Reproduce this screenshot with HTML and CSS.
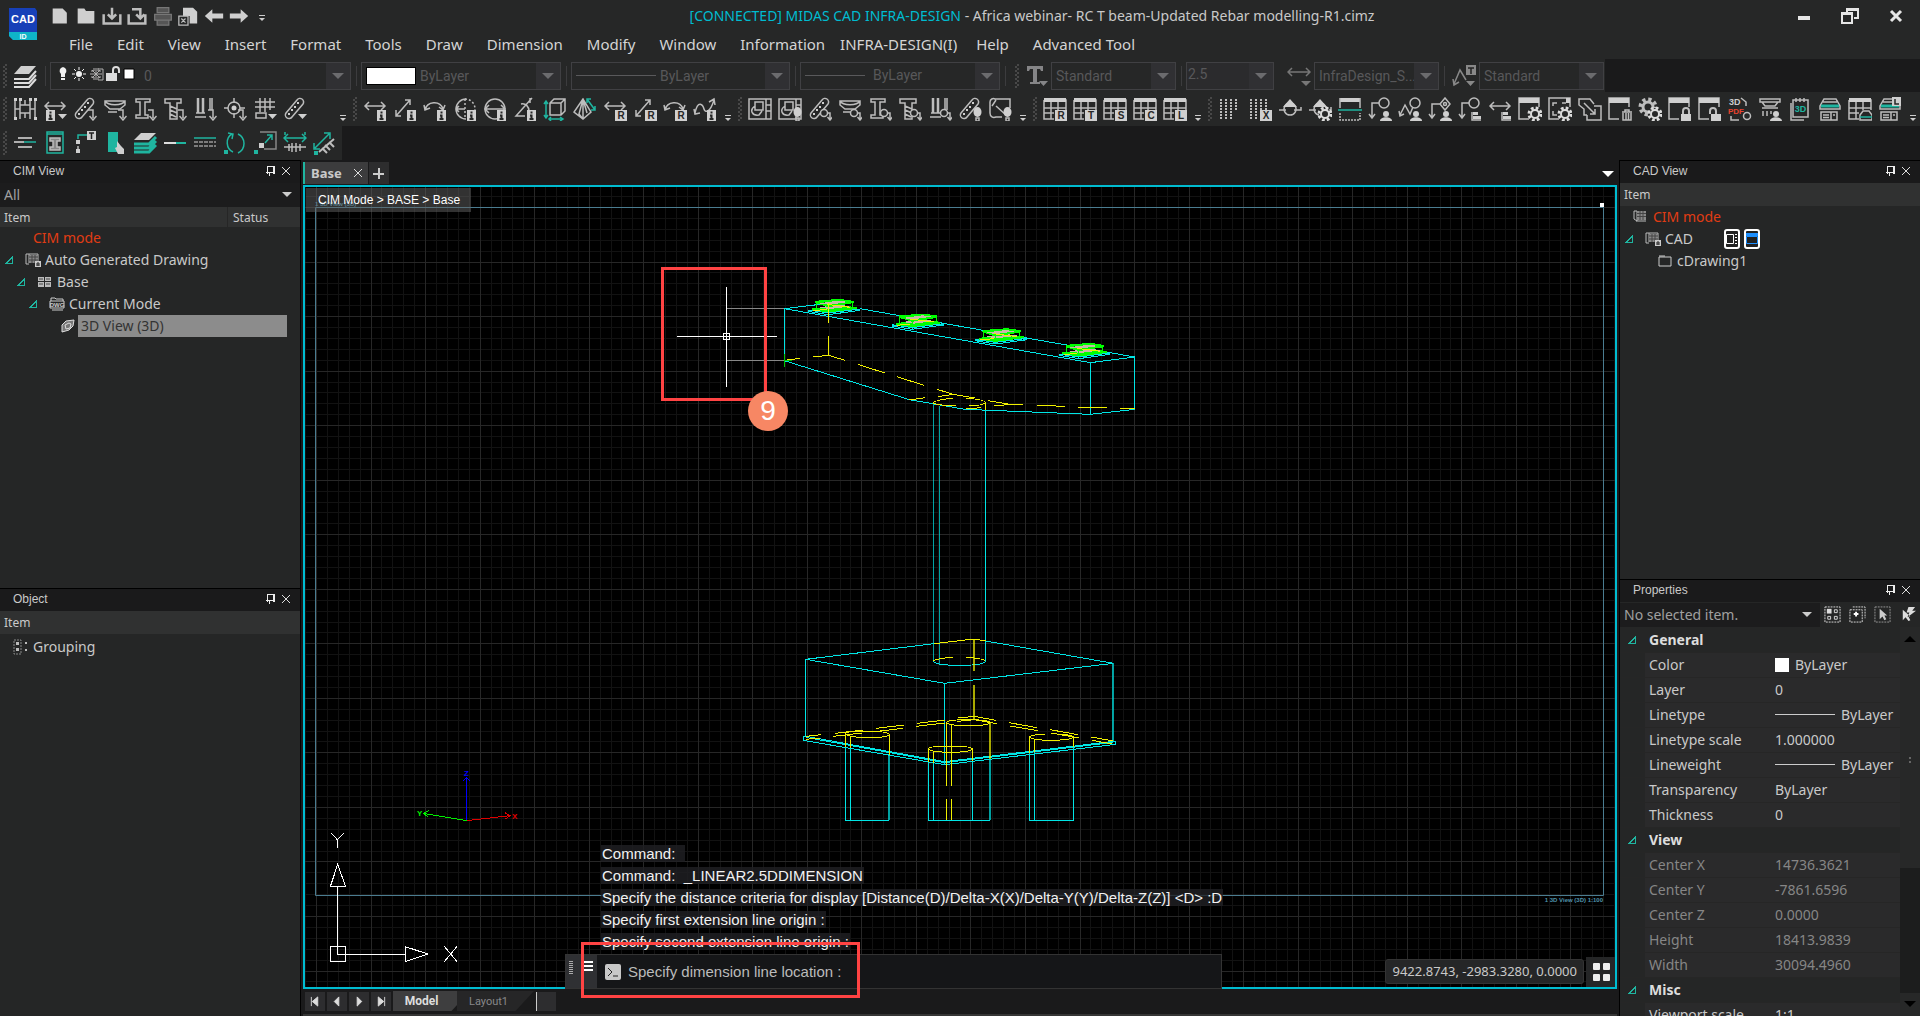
FILE: index.html
```html
<!DOCTYPE html>
<html lang="en">
<head>
    <meta charset="utf-8">
    <title>MIDAS CAD INFRA-DESIGN</title>
    <link rel="stylesheet" href="styles.css">
</head>
<body>
    <!-- Header: logo, quick access, title and menu -->
    <header class="app-header">
        <svg class="app-logo" viewBox="0 0 28 32">
            <path d="M0 0h26l2 3v29H4l-4-4z" fill="#1740b8"/>
            <path d="M0 24h28v8H4l-4-4z" fill="#0fb4c8"/>
            <text x="14" y="15" class="logo-cad">CAD</text>
            <text x="14" y="31" class="logo-id">ID</text>
        </svg>
        <div class="header-rows">
            <div class="title-row">
                <div class="quick-access" data-icons="new open save saveas print export back forward"></div>
                <h1 class="app-title"><span class="connected">[CONNECTED] MIDAS CAD INFRA-DESIGN</span> - Africa webinar- RC T beam-Updated Rebar modelling-R1.cimz</h1>
                <div class="window-buttons">
                    <button aria-label="Minimize"><svg viewBox="0 0 18 18"><path d="M3 9h12v4H3z" fill="#e6e6e6"/></svg></button>
                    <button aria-label="Restore"><svg viewBox="0 0 18 18"><path d="M6 5V2h11v9h-4M1 6h10v10H1zM1 7h10M6 3h11" fill="none" stroke="#e6e6e6" stroke-width="2"/></svg></button>
                    <button aria-label="Close"><svg viewBox="0 0 18 18"><path d="M4 4l10 10M14 4L4 14" stroke="#e6e6e6" stroke-width="3"/></svg></button>
                </div>
            </div>
            <nav class="menu">
                <button>File</button><button>Edit</button><button>View</button><button>Insert</button><button>Format</button><button>Tools</button><button>Draw</button><button>Dimension</button><button>Modify</button><button>Window</button><button>Information</button><button class="menu-infra">INFRA-DESIGN(I)</button><button>Help</button><button>Advanced Tool</button>
            </nav>
        </div>
    </header>

    <!-- Layer and style combos -->
    <div class="format-bar">
        <div class="format-inner">
            <span class="grip"></span>
            <div class="icon-run" data-icons="layers"></div>
            <span class="sep"></span>
            <div class="combo combo-layer">
                <svg class="layer-state" viewBox="0 0 78 16">
                    <path d="M5 1a4 4 0 0 1 2 7v3H3V8a4 4 0 0 1 2-7zM3 12h4v2H3z" fill="#f0f0f0"/>
                    <circle cx="21" cy="8" r="3" fill="#f0f0f0"/>
                    <path d="M21 1v3M21 12v3M14 8h3M25 8h3M16 3l2 2M24 11l2 2M26 3l-2 2M18 11l-2 2" stroke="#f0f0f0"/>
                    <path d="M38 2v12M32 8h12M34 4l8 8M42 4l-8 8M33 5h3V2M43 5h-3V2M33 11h3v3M43 11h-3v3M40 3h5v11h-5" stroke="#b0b0b0" fill="none"/>
                    <path d="M48 7h11v8H48z" fill="#ddd"/>
                    <path d="M55 7V4a3 3 0 0 1 6 0v3" stroke="#ddd" stroke-width="2" fill="none"/>
                    <path d="M66 3h10v10H66z" fill="#fff" stroke="#000"/>
                </svg>
                <select aria-label="Layer"><option>0</option></select>
            </div>
            <span class="sep"></span>
            <div class="combo combo-color"><span class="swatch"></span><select aria-label="Color"><option>ByLayer</option></select></div>
            <span class="sep"></span>
            <div class="combo combo-ltype"><span class="stroke-sample"></span><select aria-label="Linetype"><option>ByLayer</option></select></div>
            <span class="sep"></span>
            <div class="combo combo-weight"><span class="stroke-sample"></span><select aria-label="Lineweight"><option>ByLayer</option></select></div>
            <span class="sep"></span>
            <span class="grip grip-dim"></span>
            <div class="icon-run style-icon" data-icons="textstyle"></div>
            <div class="combo combo-style"><select aria-label="Text style"><option>Standard</option></select></div>
            <span class="sep"></span>
            <div class="combo combo-size"><select aria-label="Text height"><option>2.5</option></select></div>
            <div class="icon-run dim-icon" data-icons="dimstyle"></div>
            <div class="combo combo-style"><select aria-label="Dimension style"><option>InfraDesign_S...</option></select></div>
            <span class="sep"></span>
            <div class="icon-run style-icon" data-icons="leaderstyle"></div>
            <div class="combo combo-style"><select aria-label="Leader style"><option>Standard</option></select></div>
        </div>
    </div>

    <!-- Icon toolbars, filled from script.js -->
    <div class="toolbar">
        <div class="tool-group tool-group-first"><span class="grip"></span><div class="icon-run" data-icons="frame lin+il+tri rebar+down ring+down ibeam+down tbolt+down piles+down target+down mesh+tri rebar+tri"></div><span class="more"></span></div>
        <div class="tool-group"><span class="grip"></span><div class="icon-run" data-icons="lin+i diag+i arc+i circ+i diam+i angle+i box3d pyramid lin+R diag+R arc+R spline+i"></div><span class="more"></span></div>
        <div class="tool-group"><span class="grip"></span><div class="icon-run" data-icons="sheet sheet+pin rebar+node ring+node ibeam+node tbolt+node piles+node rebar+pin plate+pin"></div><span class="more"></span></div>
        <div class="tool-group"><span class="grip"></span><div class="icon-run" data-icons="table+R table+T table+S table+C table+L"></div><span class="more"></span></div>
        <div class="tool-group"><span class="grip"></span><div class="icon-run" data-icons="dots dots+X weld weld+gear section leader+man zigzag+man diamond+man leader+flag lin+flag win+gear marks+gear copywin win+trash cog+gear win+lock win+unlock pdf roller+man cal roof+doc table+minroof roof+doc+Lt"></div><span class="more"></span></div>
    </div>
    <div class="toolbar toolbar-short">
        <div class="tool-group"><span class="grip"></span><div class="icon-run" data-icons="twolines tealbeam noteT hand layersteal halfline fourlines rotate scale spacing diagdims"></div></div>
    </div>

    <main class="workspace">
        <!-- Left docks -->
        <aside class="dock dock-left">
            <section class="panel cim-panel">
                <h2 class="panel-title">CIM View <span class="panel-tools"><button class="pin" aria-label="Pin"></button><button class="close" aria-label="Close"><svg viewBox="0 0 10 10"><path d="M1 1l8 8M9 1L1 9"/></svg></button></span></h2>
                <div class="filter"><select aria-label="Filter"><option>All</option></select></div>
                <div class="columns"><span class="col-item">Item</span><span class="col-status">Status</span></div>
                <ul class="tree">
                    <li class="level-1 alert">CIM mode</li>
                    <li class="level-0"><i class="twist"></i><svg class="tree-icon" viewBox="0 0 16 16"><use href="#t-drawing"/></svg>Auto Generated Drawing</li>
                    <li class="level-2"><i class="twist"></i><svg class="tree-icon" viewBox="0 0 16 16"><path d="M1 3h6v4H1zM8 3h6v4H8zM1 8h6v5H1zM8 8h6v5H8z" fill="#bbb"/><path d="M2 5h4M9 5h4M2 10h4M9 10h4" stroke="#444"/></svg>Base</li>
                    <li class="level-3"><i class="twist"></i><svg class="tree-icon" viewBox="0 0 16 16"><path d="M2 5V2h4l1 1h7v2M1 5h14v7H1zM3 14h11" fill="none" stroke="#ccc"/><text x="8" y="11" class="dwg">DWG</text></svg>Current Mode</li>
                    <li class="level-4"><svg class="tree-icon" viewBox="0 0 16 16"><path d="M2 7l4-4 8-1-1 6-4 4-7 2zM5 7l4-2 2 1-1 4-4 1z" fill="#777" stroke="#ddd"/></svg><span class="selected">3D View (3D)</span></li>
                </ul>
            </section>
            <section class="panel">
                <h2 class="panel-title">Object <span class="panel-tools"><button class="pin" aria-label="Pin"></button><button class="close" aria-label="Close"><svg viewBox="0 0 10 10"><path d="M1 1l8 8M9 1L1 9"/></svg></button></span></h2>
                <div class="columns"><span class="col-item">Item</span></div>
                <ul class="tree tree-object">
                    <li class="level-obj"><svg class="tree-icon" viewBox="0 0 16 16"><path d="M1 1h7v14H1z" fill="none" stroke="#888" stroke-dasharray="2 1"/><path d="M3 3h3v3H3zM3 9h3v3H3zM12 3h2v2h-2zM12 10h2v2h-2z" fill="#bbb"/></svg>Grouping</li>
                </ul>
            </section>
        </aside>

        <!-- Drawing area -->
        <section class="center">
            <div class="doc-tabs">
                <div class="doc-tab"><span>Base</span><button class="tab-close" aria-label="Close tab"><svg viewBox="0 0 10 10"><path d="M1 1l8 8M9 1L1 9"/></svg></button></div>
                <button class="tab-add" aria-label="New tab"></button>
                <span class="tab-list"></span>
            </div>
            <div class="viewport">
                <svg class="drawing" viewBox="305 187 1310 800" preserveAspectRatio="xMinYMin slice">
                    <g id="grid"></g>
                    <path d="M315.500 207.500H1603.500V895.500H315.500z" class="paper"/>
                    <text x="315" y="206" class="paper-text">1 3D View (3D)</text>
                    <text x="1603" y="902" class="paper-text paper-text-end">1 3D View (3D) 1:100</text>
                    <path d="M1600 203h4v4h-4z" fill="#fff"/>
                    <defs>
                        <g id="bearing">
                            <path d="M505 184l60 10 95-13-60-10zM505 180l60 9 95-12M565 185v9" class="cyan"/>
                            <path d="M516 178l50 7 84-11-48-6z" fill="#00ff00" stroke="#00ff00" stroke-width="5"/>
                            <path d="M535 172l35 5 62-8-32-5z" fill="#c9b8a8"/>
                            <path d="M527 156l72-6 41 6-74 12z" fill="#333" stroke="#00ff00" stroke-width="7"/>
                            <path d="M536 160l60-8 30 4-58 8z" fill="#c9b8a8"/>
                            <path d="M528 160v16M638 160v14M566 168v12" stroke="#00ff00" stroke-width="3"/>
                            <path d="M560 163l70 9M520 182l40-4" class="yellow"/>
                        </g>
                        <g id="t-drawing">
                            <path d="M1 2v10h3M1 2h3v9M4 2h9v7" fill="none" stroke="#bbb"/>
                            <path d="M4 3h9v8H4z" fill="#888"/><path d="M4 5h9M4 8h9M7 3v8M10 3v8" stroke="#444"/>
                            <path d="M10 9h6v6h-6z" fill="#ccc"/><path d="M12 14v-3h2v3M12 13h2" fill="none" stroke="#222"/>
                        </g>
                    </defs>
                    <!-- pier cap and column top -->
                    <g class="model" transform="translate(640 250) scale(.33333333)">
                        <path d="M565 160L433 176 1351 338 1484 321 660 176M433 176V332L808 449 975 478 1351 493 1484 478V321M1351 338V493" class="cyan"/>
                        <path d="M880 460V1236M898 468V1242" class="cyan dim"/>
                        <path d="M1036 480V1235" class="cyan"/>
                        <path d="M565 160V218M565 258V316M440 330l40-5M519 321l46-5 50 15M653 343l82 26M771 380l81 26M891 418l49 15 65 11M808 450l47-7M893 440l47-7M1044 452l66 11 38 1M1062 468l48-5M1191 466l84 3M1314 471l86 3M1440 476h44M880 460c0-8 25-12 58-15M978 445c38 2 58 6 58 14-6 5-22 8-50 9M880 460c15 5 35 7 68 8M1036 455v25M978 477l44-4" class="yellow"/>
                        <use href="#bearing"/>
                        <use href="#bearing" x="251" y="44"/>
                        <use href="#bearing" x="501" y="88"/>
                        <use href="#bearing" x="751" y="132"/>
                        <path d="M565 160v36" class="yellow"/>
                        <path d="M260 176H433M260 332H433" stroke="#888" stroke-width="3"/>
                        <path d="M433 313v38M433 332h24" stroke="#00c800" stroke-width="3"/>
                        <path d="M259.500 111V411M111 259.500H411M250 250h19v19h-19z" fill="none" stroke="#fff" stroke-width="3"/>
                    </g>
                    <!-- footing and piles -->
                    <g class="model" transform="translate(760 600) scale(.33333333)">
                        <path d="M522 131L137 178 554 250 1060 190 677 123M137 178V410M554 250V494M130 409h8L554 485 1060 424h7v9L554 494 130 421zM137 412L554 488 1060 427" class="cyan"/>
                        <path d="M1059 190V424" class="cyan dim wide"/>
                        <path d="M520 184c8 16 150 16 157 0" class="cyan"/>
                        <path d="M522 131L642 117 677 123M520 184c6-8 28-10 58-12M618 172c30 2 56 5 58 12M137 409l46-5M137 418l43-4M225 400l84-10M220 409l85-10M348 385l84-10M343 395l86-10M471 370l84-10M468 379l86-10M595 354l47-5 66 12M592 364l50-5 69 12M747 368l84 15M751 378l83 14M870 389l84 15M873 399l84 15M993 411l67 12M996 421l60 11" class="yellow"/>
                        <path d="M642 117V213M642 255V357" class="yellow dim wide"/>
                        <path d="M256 402V441M271 408V444M388 404V466M505 447V486M520 453V488M637 447V484M559 368V557M574 374V557M559 598V660M574 598V660M809 410V460M824 418V457M940 412V440" class="yellow"/>
                        <path d="M690 368V478" class="yellow dim wide"/>
                        <path d="M256 402c4-12 124-12 133 2-10 12-120 12-133-2zM505 447c4-12 124-12 133 0-10 13-120 13-133 0zM559 368c4-12 124-12 132 0-10 12-120 12-132 0zM855 402c-30 2-46 5-46 9 10 14 125 12 132 0-4-4-20-8-52-9" class="yellow"/>
                        <path d="M256 441V661H388M271 444V661M505 486V661H691M520 488V661M637 484V661M809 460V661H940V440M824 457V661" class="cyan"/>
                        <path d="M387 466V661M690 478V661" class="cyan dim wide"/>
                    </g>
                    <!-- 3D axis and UCS icon -->
                    <g class="model" transform="translate(290 740) scale(.33333333)" fill="none" stroke-width="3">
                        <path d="M530 242V112M519 124l11-12 11 12" stroke="#0000ff"/>
                        <path d="M530 242L400 220M417 212l-17 8 14 11" stroke="#00f000"/>
                        <path d="M530 242L660 227M645 218l15 9-13 10" stroke="#e00000"/>
                        <path d="M142.500 643V440M121 440h46L143 373zM121 619h46v46h-46zM142 643H346M346 620v45l67-23z" stroke="#fff"/>
                        <path d="M123 279l19 20 20-20M142 299v25M463 619l38 46M501 619l-38 46" stroke="#fff"/>
                    </g>
                    <text x="464" y="776" class="axis" fill="#0000ff">Z</text>
                    <text x="417" y="816" class="axis" fill="#00f000">Y</text>
                    <text x="512" y="819" class="axis" fill="#e00000">X</text>
                </svg>
                <div class="breadcrumb">CIM Mode &gt; BASE &gt; Base</div>
                <div class="coords">9422.8743, -2983.3280, 0.0000</div>
                <button class="view-grid" aria-label="Views"><i></i><i></i><i></i><i></i></button>
            </div>
            <div class="command">
                <div class="history">
                    <p><span>Command:&nbsp;&nbsp;</span></p>
                    <p><span>Command:&nbsp; _LINEAR2.5DDIMENSION</span></p>
                    <p><span>Specify the distance criteria for display [Distance(D)/Delta-X(X)/Delta-Y(Y)/Delta-Z(Z)] &lt;D&gt; :D</span></p>
                    <p><span>Specify first extension line origin :</span></p>
                    <p><span>Specify second extension line origin :</span></p>
                </div>
                <div class="prompt">
                    <span class="prompt-grip"><i class="dots"></i><i class="lines"></i></span>
                    <label for="cmd"><svg viewBox="0 0 16 16"><rect width="16" height="16" rx="2" fill="#c8c8c8"/><path d="M3 4l4 4-4 4M8 12h5" fill="none" stroke="#222"/></svg></label>
                    <input id="cmd" type="text" value="Specify dimension line location :">
                </div>
            </div>
            <div class="layout-tabs">
                <button class="nav-btn" aria-label="First"><svg viewBox="0 0 12 12"><path d="M2 1v10M3 6l6-5v10z"/></svg></button>
                <button class="nav-btn" aria-label="Previous"><svg viewBox="0 0 12 12"><path d="M3 6l5-5v10z"/></svg></button>
                <button class="nav-btn" aria-label="Next"><svg viewBox="0 0 12 12"><path d="M9 6L4 1v10z"/></svg></button>
                <button class="nav-btn" aria-label="Last"><svg viewBox="0 0 12 12"><path d="M10 1v10M9 6L3 1v10z"/></svg></button>
                <button class="layout-tab active">Model</button>
                <button class="layout-tab">Layout1</button>
                <span class="splitter"></span>
            </div>
            <div class="callout callout-cursor"></div>
            <div class="callout callout-prompt"></div>
            <div class="step">9</div>
        </section>

        <!-- Right docks -->
        <aside class="dock dock-right">
            <section class="panel cad-panel">
                <h2 class="panel-title">CAD View <span class="panel-tools"><button class="pin" aria-label="Pin"></button><button class="close" aria-label="Close"><svg viewBox="0 0 10 10"><path d="M1 1l8 8M9 1L1 9"/></svg></button></span></h2>
                <div class="columns"><span class="col-item">Item</span></div>
                <ul class="tree">
                    <li class="level-cim alert"><svg class="tree-icon" viewBox="0 0 16 16"><path d="M1 2h3v10M1 2v8l3 2" fill="none" stroke="#bbb"/><path d="M4 2h9v9H4z" fill="#888"/><path d="M4 4.500h9M4 7.500h9M7 2v9M10 2v9" stroke="#444"/><path d="M3 12h10" stroke="#bbb"/></svg>CIM mode</li>
                    <li class="level-0"><i class="twist"></i><svg class="tree-icon" viewBox="0 0 16 16"><use href="#t-drawing"/></svg>CAD
                        <span class="cad-tools">
                            <button aria-label="Sheet"><svg viewBox="0 0 16 20"><rect x="1" y="1" width="14" height="18" rx="2" fill="#222" stroke="#fff" stroke-width="2"/><path d="M2.500 5.500h7v9h-7zM11 5.500h2M11 8.500h2M11 11.500h2M11 14.500h2" fill="none" stroke="#fff"/></svg></button>
                            <button aria-label="Window"><svg viewBox="0 0 16 20"><rect x="1" y="1" width="14" height="18" rx="2" fill="#222" stroke="#fff" stroke-width="2"/><path d="M2.500 7.500h11v7h-11z" fill="none" stroke="#1e90ff"/><path d="M2 4h12v3H2z" fill="#1e90ff"/></svg></button>
                        </span>
                    </li>
                    <li class="level-draw"><svg class="tree-icon" viewBox="0 0 16 16"><path d="M2 4h12v9H2zM2 3h6" fill="none" stroke="#ccc"/></svg>cDrawing1</li>
                </ul>
            </section>
            <section class="panel props-panel">
                <h2 class="panel-title">Properties <span class="panel-tools"><button class="pin" aria-label="Pin"></button><button class="close" aria-label="Close"><svg viewBox="0 0 10 10"><path d="M1 1l8 8M9 1L1 9"/></svg></button></span></h2>
                <div class="selection">
                    <div class="filter"><select aria-label="Selection"><option>No selected item.</option></select></div>
                    <button aria-label="Quick select"><svg viewBox="0 0 18 18"><path d="M1 1h16v16H1z" fill="none" stroke="#ddd" stroke-dasharray="2 1"/><path d="M3 3h5v5H3z" fill="#ddd"/><path d="M11 4h3v3h-3zM4 11h3v3H4zM11 11h3v3h-3z" fill="none" stroke="#ddd"/></svg></button>
                    <button aria-label="Add"><svg viewBox="0 0 18 18"><path d="M4 1h13v12M1 4h13v13H1z" fill="none" stroke="#ddd" stroke-dasharray="2 1"/><path d="M7.500 6v5M5 8.500h5" stroke="#fff" stroke-width="2"/></svg></button>
                    <button aria-label="Select"><svg viewBox="0 0 18 18"><path d="M1 1h16v16H1z" fill="none" stroke="#999" stroke-dasharray="2 1"/><path d="M6 3v11l3-3 2 4 2-1-2-4h3z" fill="#ccc"/></svg></button>
                    <button aria-label="Toggle"><svg viewBox="0 0 18 18"><path d="M4 4v11l3-3 3 4 2-1-2-4h2zM10 1h7l-3 4h4l-9 7 2-5H8z" fill="#ddd"/></svg></button>
                </div>
                <div class="props-scroll">
                    <table class="props">
                        <tbody>
                            <tr class="group"><td><i class="twist"></i></td><th colspan="2">General</th></tr>
                            <tr><td></td><th>Color</th><td><span class="white-box"></span>ByLayer</td></tr>
                            <tr><td></td><th>Layer</th><td>0</td></tr>
                            <tr><td></td><th>Linetype</th><td><span class="line-sample"></span>ByLayer</td></tr>
                            <tr><td></td><th>Linetype scale</th><td>1.000000</td></tr>
                            <tr><td></td><th>Lineweight</th><td><span class="line-sample"></span>ByLayer</td></tr>
                            <tr><td></td><th>Transparency</th><td>ByLayer</td></tr>
                            <tr><td></td><th>Thickness</th><td>0</td></tr>
                            <tr class="group"><td><i class="twist"></i></td><th colspan="2">View</th></tr>
                            <tr class="readonly"><td></td><th>Center X</th><td>14736.3621</td></tr>
                            <tr class="readonly"><td></td><th>Center Y</th><td>-7861.6596</td></tr>
                            <tr class="readonly"><td></td><th>Center Z</th><td>0.0000</td></tr>
                            <tr class="readonly"><td></td><th>Height</th><td>18413.9839</td></tr>
                            <tr class="readonly"><td></td><th>Width</th><td>30094.4960</td></tr>
                            <tr class="group"><td><i class="twist"></i></td><th colspan="2">Misc</th></tr>
                            <tr><td></td><th>Viewport scale</th><td>1:1</td></tr>
                        </tbody>
                    </table>
                    <div class="scrollbar"><span class="thumb"><i class="up"></i><i class="hold"></i></span><span class="down-box"><i class="down"></i></span></div>
                </div>
            </section>
        </aside>
    </main>
    <script src="script.js"></script>
</body>
</html>
```
FILE: styles.css
```css
:root {
    --bar: #262727;
    --dark: #1a1a1b;
    --panel: #252626;
    --header: #303131;
    --text: #c9c9c9;
    --muted: #58585a;
    --cyan: #00bcd0;
    --teal: #1fb5a0;
    --ui: "Noto Sans", "Open Sans", sans-serif;
    --arial: "Liberation Sans", Arial, sans-serif;
}

* {
    box-sizing: border-box;
}

body {
    margin: 0;
    height: 100vh;
    display: flex;
    flex-direction: column;
    overflow: hidden;
    background: var(--dark);
    color: var(--text);
    font-family: var(--ui);
    font-size: 14px;
}

button {
    padding: 0;
    border: 0;
    background: none;
    color: inherit;
    font: inherit;
}

select,
input {
    min-width: 0;
    padding: 0;
    border: 0;
    outline: 0;
    background: none;
    color: inherit;
    font: inherit;
    appearance: none;
}

svg {
    display: block;
}

/* Header */
.app-header {
    display: flex;
    height: 59px;
    background: var(--bar);
}

.app-logo {
    width: 28px;
    height: 32px;
    margin: 8px 12px 0 9px;
}

.logo-cad {
    font: bold 11px var(--arial);
    fill: #fff;
    text-anchor: middle;
}

.logo-id {
    font: bold 7px var(--arial);
    fill: #fff;
    text-anchor: middle;
}

.header-rows {
    flex: 1;
}

.title-row {
    display: flex;
    align-items: center;
    height: 31px;
}

.quick-access {
    display: flex;
    align-items: center;
    gap: 2px;
    width: 220px;
    padding-left: 2px;
}

.quick-access button {
    width: 24px;
}

.quick-access svg {
    width: 20px;
    height: 20px;
}

.app-title {
    flex: 1;
    margin: 0;
    font-size: 14px;
    font-weight: normal;
    text-align: center;
}

.connected {
    color: var(--cyan);
}

.window-buttons {
    display: flex;
    gap: 28px;
    padding-right: 15px;
}

.window-buttons svg {
    width: 18px;
    height: 18px;
}

.menu {
    display: flex;
    padding-left: 8px;
    font-size: 15px;
    line-height: 26px;
    color: #d4d4d4;
}

.menu button {
    padding: 0 12px;
    white-space: nowrap;
}

.menu .menu-infra {
    display: flex;
    justify-content: center;
    width: 123px;
    margin-right: 4px;
    padding: 0;
    overflow: hidden;
}

/* Combos */
.format-bar {
    display: flex;
    height: 33px;
}

.format-inner {
    display: flex;
    align-items: center;
    background: var(--bar);
    padding-right: 1px;
}

.grip {
    flex: none;
    width: 4px;
    height: 24px;
    margin: 0 3px;
    background: repeating-conic-gradient(#484848 0 25%, transparent 0 50%) 0 0 / 4px 4px;
}

.grip-dim {
    margin: 0 2px 0 5px;
}

.sep {
    width: 1px;
    height: 20px;
    margin: 0 4px 0 5px;
    background: #3c3c3e;
}

.combo {
    position: relative;
    display: flex;
    align-items: center;
    height: 28px;
    border: 1px solid #404043;
    color: var(--muted);
    font-family: Roboto, sans-serif;
}

.combo::before {
    content: "";
    order: 2;
    flex: none;
    width: 24px;
    height: 26px;
    background: #303033;
}

.combo::after {
    content: "";
    position: absolute;
    right: 6px;
    top: 10px;
    border: 6px solid transparent;
    border-top-color: #6b6b6e;
    border-bottom: 0;
    pointer-events: none;
}

.combo select {
    flex: 1;
    padding-left: 4px;
}

.combo-layer {
    width: 301px;
}

.combo-layer select {
    padding-left: 8px;
}

.layer-state {
    width: 78px;
    height: 16px;
    margin: 0 0 4px 7px;
}

.combo-color {
    width: 200px;
}

.swatch {
    width: 50px;
    height: 18px;
    margin-left: 4px;
    border: 1px solid #000;
    background: #fff;
}

.combo-ltype {
    width: 219px;
}

.stroke-sample {
    width: 80px;
    height: 1px;
    margin-left: 4px;
    background: #59595b;
}

.combo-weight {
    width: 200px;
}

.combo-weight .stroke-sample {
    width: 60px;
}

.combo-weight select {
    padding: 0 0 2px 8px;
}

.combo-style {
    width: 125px;
}

.combo-size {
    width: 88px;
    background: #2b2b2d;
}

.combo-size select {
    padding: 0 0 4px 1px;
}

.icon-run {
    display: flex;
}

.icon-run button {
    width: 30px;
    padding: 0 3px;
}

.icon-run svg {
    width: 24px;
    height: 24px;
}

.dim-icon {
    padding-left: 10px;
}

/* Toolbars */
.toolbar {
    display: flex;
    height: 34px;
    background: var(--bar);
}

.toolbar-short {
    align-self: flex-start;
    width: 342px;
}

.tool-group {
    display: flex;
    align-items: center;
}

.tool-group-first {
    width: 350px;
}

.tool-group-first .more {
    margin-left: auto;
}

.more {
    position: relative;
    width: 15px;
    height: 24px;
}

.more::before,
.qa-more::before {
    content: "";
    position: absolute;
    left: 5px;
    bottom: 5px;
    width: 6px;
    height: 1px;
    background: #ccc;
}

.more::after,
.qa-more::after {
    content: "";
    position: absolute;
    left: 5px;
    bottom: 0;
    border: 3px solid transparent;
    border-top-color: #ccc;
    border-bottom: 0;
}

.qa-more {
    position: relative;
    width: 15px;
    height: 10px;
}

/* Workspace */
.workspace {
    flex: 1;
    display: flex;
    min-height: 0;
}

.dock {
    display: flex;
    flex-direction: column;
    width: 300px;
}

.panel {
    flex: 1;
    min-height: 0;
    background: var(--panel);
    border-top: 1px solid #000;
}

.cim-panel {
    flex: 0 0 50%;
}

.cad-panel {
    flex: 0 0 49%;
}

.panel-title {
    display: flex;
    justify-content: space-between;
    align-items: center;
    height: 22px;
    margin: 0;
    padding: 0 9px 2px 13px;
    background: var(--dark);
    font-family: var(--arial);
    font-size: 12px;
    font-weight: normal;
}

.panel-tools {
    display: flex;
    gap: 8px;
}

.pin {
    position: relative;
    width: 8px;
    height: 10px;
}

.pin::before {
    content: "";
    position: absolute;
    left: 2px;
    top: 0;
    width: 5px;
    height: 7px;
    border: 1px solid #eee;
    border-right-width: 2px;
    border-bottom: 0;
}

.pin::after {
    content: "";
    position: absolute;
    left: 1px;
    top: 6px;
    width: 7px;
    height: 4px;
    background: linear-gradient(#eee, #eee) 0 0 / 7px 1px no-repeat, linear-gradient(#eee, #eee) 3px 0 / 1px 4px no-repeat;
}

.close svg,
.tab-close svg {
    width: 10px;
    height: 10px;
    stroke: #ddd;
}

.filter {
    position: relative;
    height: 24px;
    background: #1c1c1d;
}

.filter select {
    width: 100%;
    height: 23px;
    padding-left: 4px;
    color: #a0a0a0;
}

.filter::after {
    content: "";
    position: absolute;
    right: 8px;
    top: 9px;
    border: 5px solid transparent;
    border-top-color: #ccc;
    border-bottom: 0;
}

.columns {
    display: flex;
    height: 20px;
    background: var(--header);
    font-size: 12px;
    line-height: 22px;
}

.col-item {
    flex: 1;
    padding-left: 4px;
}

.col-status {
    width: 73px;
    padding-left: 5px;
    border-left: 1px solid #262626;
}

.dock-right .columns,
.panel:last-child .columns {
    height: 23px;
    line-height: 24px;
}

.tree {
    margin: 0;
    padding: 0;
    list-style: none;
}

.tree li {
    display: flex;
    align-items: center;
    height: 22px;
    line-height: 22px;
}

.tree-object {
    padding-top: 2px;
}

.tree .alert {
    color: #e03c14;
}

.tree-icon {
    width: 16px;
    height: 16px;
    margin-right: 4px;
}

.dwg {
    font: bold 6px var(--arial);
    fill: #ccc;
    text-anchor: middle;
}

.twist {
    display: block;
    width: 8px;
    height: 8px;
    margin-right: 12px;
    background: linear-gradient(135deg, transparent 48%, var(--teal) 48% 62%, transparent 62%), linear-gradient(var(--teal), var(--teal)) 100% 0 / 1px 100% no-repeat, linear-gradient(var(--teal), var(--teal)) 0 100% / 100% 1px no-repeat;
}

.level-0 {
    padding-left: 5px;
}

.level-1 {
    padding-left: 33px;
}

.level-2 {
    padding-left: 17px;
}

.level-3 {
    padding-left: 29px;
}

.level-4 {
    padding-left: 60px;
}

.level-4 .tree-icon {
    margin-right: 2px;
}

.level-obj,
.level-cim {
    padding-left: 13px;
}

.level-draw {
    padding-left: 37px;
}

.selected {
    width: 209px;
    padding-left: 3px;
    background: #8c8c8c;
    color: #333;
}

.cad-tools {
    display: flex;
    gap: 4px;
    margin-left: 31px;
}

.cad-tools svg {
    width: 16px;
    height: 20px;
}

/* Center */
.center {
    position: relative;
    flex: 1;
    display: flex;
    flex-direction: column;
    min-width: 0;
    padding: 0 2px;
    border-left: 1px solid #000;
    border-right: 1px solid #000;
}

.doc-tabs {
    display: flex;
    gap: 1px;
    height: 25px;
    padding-top: 2px;
}

.doc-tab {
    display: flex;
    align-items: center;
    gap: 11px;
    width: 65px;
    height: 22px;
    padding-left: 6px;
    border-left: 2px solid var(--teal);
    background: #3c3c3d;
    font-size: 13px;
    font-weight: bold;
}

.tab-add {
    width: 20px;
    height: 22px;
    background: linear-gradient(#ccc, #ccc) 4px 11px / 11px 2px no-repeat, linear-gradient(#ccc, #ccc) 9px 6px / 2px 11px no-repeat, #2d2d2e;
}

.tab-list {
    margin: 9px 3px 0 auto;
    height: 0;
    border: 6px solid transparent;
    border-top-color: #fff;
    border-bottom: 0;
}

.viewport {
    position: relative;
    flex: 1;
    min-height: 0;
    overflow: hidden;
    border: 2px solid var(--cyan);
    background: #000;
}

.drawing {
    position: absolute;
    inset: 0;
    width: 100%;
    height: 100%;
}

.minor {
    stroke: #121212;
    shape-rendering: crispEdges;
}

.major {
    stroke: #272727;
    shape-rendering: crispEdges;
}

.paper {
    fill: none;
    stroke: #4a7c90;
}

.paper-text {
    font: bold 6px var(--arial);
    fill: #4f93ac;
}

.paper-text-end {
    text-anchor: end;
}

.model {
    shape-rendering: crispEdges;
}

.cyan,
.yellow {
    fill: none;
    stroke: #00e5e5;
    stroke-width: 3;
}

.yellow {
    stroke: #f0f000;
}

.dim {
    opacity: 0.7;
}

.wide {
    stroke-width: 5;
}

.axis {
    font: bold 8px var(--arial);
}

.breadcrumb {
    position: absolute;
    left: 1px;
    top: 1px;
    padding: 0 11px 0 12px;
    background: rgba(100, 100, 100, 0.5);
    color: #fff;
    font-family: var(--arial);
    font-size: 12px;
    line-height: 24px;
}

.coords {
    position: absolute;
    right: 31px;
    bottom: 3px;
    padding: 0 6px;
    border: 1px solid #333;
    border-radius: 3px;
    background: #252627;
    font-size: 13px;
    line-height: 23px;
}

.view-grid {
    position: absolute;
    right: -2px;
    bottom: 0;
    display: grid;
    grid-template-columns: 7px 7px;
    gap: 3px;
    padding: 6px 7px;
    width: 31px;
    height: 30px;
    background: #252627;
}

.view-grid i {
    height: 7px;
    border-radius: 1px;
    background: #eee;
}

/* Command line floats over the drawing */
.command {
    position: absolute;
    left: 264px;
    bottom: 27px;
    width: 657px;
    font-family: var(--arial);
    font-size: 15px;
    color: #f2f2f2;
}

.history {
    padding: 0 0 1px 36px;
}

.history p {
    margin: 0;
    line-height: 22px;
    white-space: nowrap;
}

.history span {
    padding: 0 1px;
    background: rgba(32, 33, 36, 0.8);
}

.prompt {
    display: flex;
    align-items: center;
    height: 35px;
    border: 1px solid #333;
    background: #151618;
    color: #bbb;
}

.prompt-grip {
    display: flex;
    align-items: flex-start;
    justify-content: space-between;
    width: 31px;
    height: 33px;
    padding: 6px 4px 0 3px;
    background: #2f3033;
}

.prompt-grip .dots {
    width: 4px;
    height: 14px;
    background: repeating-linear-gradient(#aaa 0 1px, transparent 1px 2px);
}

.prompt-grip .lines {
    width: 9px;
    height: 10px;
    background: repeating-linear-gradient(#fff 0 2px, transparent 2px 4px);
}

.prompt label {
    padding: 0 7px 0 8px;
}

.prompt svg {
    width: 16px;
    height: 16px;
}

.prompt input {
    flex: 1;
}

.layout-tabs {
    display: flex;
    align-items: center;
    gap: 2px;
    height: 27px;
    padding: 1px 2px 2px;
    border-bottom: 2px solid #353535;
    background: var(--dark);
}

.nav-btn {
    width: 20px;
    height: 19px;
    padding: 4px;
    background: #2d2d2f;
}

.nav-btn svg {
    width: 12px;
    height: 11px;
    fill: #ddd;
    stroke: #ddd;
}

.layout-tab {
    width: 77px;
    height: 20px;
    padding-right: 14px;
    background: #262627;
    clip-path: polygon(0 0, 100% 0, 76% 100%, 0 100%);
    color: #88888a;
    font-family: Roboto, sans-serif;
    font-size: 11px;
}

.layout-tab.active {
    margin-right: -15px;
    padding-right: 20px;
    background: #3e3e3f;
    color: #ddd;
    font-size: 12px;
    font-weight: bold;
}

.splitter {
    width: 20px;
    height: 19px;
    border-left: 1px solid #ccc;
    background: #2d2d2f;
}

.callout {
    position: absolute;
    border: 3px solid #ff4343;
}

.callout-cursor {
    left: 360px;
    top: 107px;
    width: 106px;
    height: 134px;
}

.callout-prompt {
    left: 280px;
    bottom: 18px;
    width: 279px;
    height: 56px;
}

.step {
    position: absolute;
    left: 447px;
    top: 231px;
    width: 40px;
    height: 40px;
    border-radius: 50%;
    background: #f78764;
    color: #fff;
    font: 28px/40px var(--arial);
    text-align: center;
}

/* Properties */
.props-panel {
    display: flex;
    flex-direction: column;
}

.props-panel .panel-title {
    flex: none;
}

.selection {
    display: flex;
    align-items: center;
    height: 25px;
}

.selection .filter {
    flex: 1;
}

.selection button {
    width: 25px;
    padding-left: 4px;
}

.selection svg {
    width: 17px;
    height: 17px;
}

.props-scroll {
    flex: 1;
    display: flex;
    min-height: 0;
    overflow: hidden;
}

.props {
    flex: 1;
    align-self: flex-start;
    border-collapse: collapse;
    table-layout: fixed;
    white-space: nowrap;
}

.props td,
.props th {
    height: 25px;
    padding: 0 0 0 4px;
    border-bottom: 1px solid #262626;
    background: #2a2a2b;
    font-weight: normal;
    text-align: left;
    line-height: 24px;
}

.props th {
    width: 126px;
}

.props td:first-child {
    width: 25px;
    padding-left: 8px;
}

.props td:first-child,
.props .group th {
    background: var(--panel);
}

.props .group th {
    color: #ddd;
    font-weight: bold;
}

.props .twist {
    margin: 0;
}

.readonly {
    color: #868686;
}

.white-box {
    display: inline-block;
    width: 14px;
    height: 14px;
    margin-right: 6px;
    background: #fff;
    vertical-align: -2px;
}

.line-sample {
    display: inline-block;
    width: 60px;
    height: 1px;
    margin-right: 6px;
    background: #ccc;
    vertical-align: 5px;
}

.scrollbar {
    display: flex;
    flex-direction: column;
    justify-content: space-between;
    width: 20px;
    background: #1c1d1d;
}

.thumb {
    display: flex;
    flex-direction: column;
    justify-content: space-between;
    align-items: center;
    height: 241px;
    padding-top: 9px;
    background: #272828;
}

.hold {
    width: 2px;
    height: 111px;
    background: linear-gradient(#666 2px, transparent 2px 4px, #666 4px 6px, transparent 6px);
}

.up,
.down {
    border: 6px solid transparent;
    border-bottom-color: #000;
    border-top: 0;
}

.down-box {
    display: flex;
    justify-content: center;
    height: 23px;
    padding-top: 8px;
    background: #272828;
}

.down {
    height: 0;
    border: 6px solid transparent;
    border-top-color: #000;
    border-bottom: 0;
}
```
FILE: script.js
```js
// Icon parts on a 24x24 box. Toolbars combine them with "+", e.g. lin+i
const letter = c => `<path class="f" d="M12 13h12v11H12z"/><text x="18" y="22" font-family="Liberation Sans" font-size="10" font-weight="bold" text-anchor="middle" fill="#262727" stroke="none">${c}</text>`;
const gear = '<circle cx="17" cy="17" r="6" fill="#262727" stroke="#dcdcdc" stroke-width="3" stroke-dasharray="2.700 2"/><circle cx="17" cy="17" r="4" stroke="#dcdcdc" stroke-width="2"/>';
const win = '<path d="M21 10V1H1v21h10"/><path class="f" d="M1 1h20v5H1z"/>';

const parts = {
    // badges
    i: '<path class="f" d="M14 13h9v11h-9z"/><path d="M17.500 15.500h2M17 18.500h1.500v3.500M16.500 22h4" stroke="#262727" stroke-width="2"/>',
    il: '<path class="f" d="M3 13h9v11H3z"/><path d="M6.500 15.500h2M6 18.500h1.500v3.500M5.500 22h4" stroke="#262727" stroke-width="2"/>',
    tri: '<path class="f" d="M15 17h9l-4.500 5z"/>',
    down: '<path d="M15 13h5v8M16.500 19l3.500 4 3.500-4"/>',
    node: '<circle cx="16" cy="16" r="3.500" fill="#262727"/><path d="M20 16h2v6M19.500 20l2.500 3 2.500-3"/>',
    pin: '<ellipse class="f" cx="19.500" cy="15" rx="4" ry="5"/><path d="M18 21h3v3h-3z"/>',
    gear,
    man: '<circle class="f" cx="18" cy="17" r="3"/><path class="f" d="M12 24c0-5 12-5 12 0z"/>',
    flag: '<path d="M14 15v8h9" /><path class="f" d="M15 15h5v3h-5zM15 19h8v3h-8z"/>',
    trash: '<path d="M14 15h10M17 15v-2h4v2M15 16v7h8v-7M18 16v7M20.500 16v7"/>',
    lock: '<path class="f" d="M13 17h10v7H13z"/><path d="M15 17v-3a3 3 0 0 1 6 0v3" stroke-width="2"/>',
    unlock: '<path class="f" d="M13 17h10v7H13z"/><path d="M12 17v-3a3 3 0 0 1 6 0v3" stroke-width="2"/>',
    R: letter('R'), T: letter('T'), S: letter('S'), C: letter('C'), L: letter('L'), X: letter('X'),
    Lt: '<path class="f" d="M14 0h9v9h-9z"/><path d="M17 2v5h4" stroke="#262727"/>',
    doc: '<path d="M3 15h16v8H3zM13 15v8M5 18h6M5 20.500h6M15 18h2"/>',
    minroof: '<path d="M12 18l3-4h6l3 4v5H12z" fill="#262727"/><path class="t" d="M12 20h12"/>',
    // shapes
    frame: '<path d="M2 3v19M7 3v19M17 3v19M22 3v19M7 8h10v8H7M12 3v5M12 16v5M7 12H2M22 12h-5"/><path class="f" d="M1 1h3v3H1zM6 1h3v3H6zM16 1h3v3h-3zM21 1h3v3h-3zM1 20h3v3H1zM21 20h3v3h-3z"/>',
    lin: '<path d="M2 9h20M6 5L2 9l4 4M18 5l4 4-4 4"/>',
    rebar: '<path d="M3 16L14 3a3.500 3.500 0 0 1 6 4L9 20a3.500 3.500 0 0 1-6-4z"/><path class="f" d="M5 16h2v2H5zM8 12h2v2H8zM11 9h2v2h-2zM14 5h2v2h-2z"/>',
    ring: '<path d="M2 4h20v4l-5 4H7L2 8zM2 4c3 5 17 5 20 0M5 15h9"/>',
    ibeam: '<path d="M3 2h14v3h-5v13h3v3H3v-3h4V5H3z"/>',
    tbolt: '<path d="M2 2h16v4h-4v16H7V6H2zM7 9l7 3M7 13l7 3M7 17l6 3"/>',
    piles: '<path d="M5 1v15M10 1v15M17 1v12M19 1v12M3 16h9M2 20h11"/><path d="M5 1v15M10 1v15" stroke-width="2.500"/>',
    target: '<circle cx="11" cy="11" r="6"/><circle class="f" cx="11" cy="11" r="2.500"/><path d="M11 1v5M11 16v5M1 11h4M17 11h5"/>',
    mesh: '<path d="M7 1v14M12 1v14M17 1v12M2 5h20M2 10h20M3 16h10v5H3z"/>',
    diag: '<path d="M3 19L17 3M12 3h5v5M3 13v6h5"/>',
    arc: '<path d="M2 13C4 4 17 3 20 12M16 10l4 3 2-5M1 8l1 5 5-2"/>',
    circ: '<path d="M13 2A10 10 0 1 0 13 22M3 12h9M6 9l-3 3 3 3"/><path d="M12 2A10 10 0 0 1 22 13M12 2v20" stroke-dasharray="2 2"/>',
    diam: '<circle cx="12" cy="12" r="10"/><path d="M3 12h18M6 8l-4 4 4 4M18 8l4 4-4 4"/>',
    angle: '<path d="M19 1L3 19h9M8 7c5-1 8 3 8 7M17 1v5"/>',
    box3d: '<path d="M7 6l4-4h11v12l-4 4H7zM7 6h11v12M18 6l4-4"/><path class="t" d="M3 5v15M1 7l2-3 2 3M1 18l2 3 2-3M6 22h14M8 20l-2 2 2 2M17 20l3 2-3 2"/>',
    pyramid: '<path d="M10 2L1 15l9 7 8-7zM10 2v20M10 2L6 17l4 5M10 2l4 14"/><path class="t" d="M14 2l8 11M14 6V2h4M22 9v4h-4"/>',
    spline: '<path d="M2 16C5 2 10 8 11 12s6 4 10-9M16 5l5-3 1 6M1 12l1 5 5-1"/>',
    sheet: '<path d="M1 2h22v20H1zM18 2v20M18 8h5M18 14h5M7 5h8v8H7zM7 9c-6 4-3 10 4 9l3-4"/>',
    plate: '<path d="M2 5c0-3 3-4 5-3h15v9M4 9l4-6M8 9l10 9M2 5v11c0 4 3 5 6 4h6"/>',
    table: '<path d="M1 3h22v10M1 3v19h10M1 11h22M1 16h10M8 4v18M15 4v9"/><path class="f" d="M1 1h22v4H1z"/>',
    dots: '<path d="M3 2v20M8 2v20M13 2v20M18 2v11" stroke-width="2" stroke-dasharray="2 1"/>',
    weld: '<path d="M1 13h7M16 13h7v-3M12 6a6 6 0 1 0 .1 0"/><path class="f" d="M5 10l7-8 7 8z"/>',
    section: '<path class="f" d="M2 1h20v4H2z"/><path d="M2 1v10M22 1v10"/><path class="t" d="M0 13h24"/><path d="M2 16v7h20v-7" stroke-dasharray="2 1"/>',
    leader: '<circle cx="16" cy="6" r="5"/><path d="M11 6H4v14M1 17l3 4 3-4"/>',
    zigzag: '<circle cx="17" cy="6" r="5"/><path d="M2 18L7 8l5 9 3-7M1 14l1 5 4-2"/>',
    diamond: '<path d="M17 1l5 6-5 6-5-6zM12 7H4v13M1 17l3 4 3-4"/><circle cx="17" cy="7" r="1.500"/>',
    win,
    marks: '<path d="M22 10V1H1v21h10M1 6V1h5M5 9V6h4M5 14v4h4M18 6h-4"/><path class="f" d="M18 1h4v5h-4z"/>',
    copywin: '<path d="M9 18H6V12L1 8V2h11l4 5M6 6l11 11M17 12v5h-5M16 9h7v14H9v-5"/>',
    cog: '<circle cx="10" cy="10" r="7" stroke-width="5" stroke-dasharray="3 2.500"/><circle cx="10" cy="10" r="5" stroke-width="3"/>',
    pdf: '<text x="1" y="8" font-family="Liberation Sans" font-size="9" font-weight="bold" fill="#ccc" stroke="none">3D</text><text x="0" y="17" font-family="Liberation Sans" font-size="8" font-weight="bold" fill="#e8432e" stroke="none">PDF</text><path d="M13 1l5 4v4M3 19v4h8"/><circle cx="19" cy="19" r="3.500"/>',
    roller: '<path d="M2 2h20v3H2zM4 5l3 4h10l3-4M4 11h16M5 14v5M9 14v5M13 14v3"/>',
    cal: '<path d="M5 3h15v17H5zM3 6v17h13M8 1v4M12 1v4M16 1v4"/><text x="12.500" y="15" font-family="Liberation Sans" font-size="9" font-weight="bold" text-anchor="middle" fill="#1fb5a0" stroke="none">3D</text>',
    roof: '<path d="M6 2h12l4 7v3H2V9zM5 5h14"/><path class="t" d="M3 9h18" stroke-width="3"/>',
    // style bar
    layers: '<path class="f" d="M8 2h15l-7 8H1z"/><path d="M1 15h15l7-8M1 19h15l7-8M1 23h15l7-8" stroke="#ddd" stroke-width="2"/>',
    textstyle: '<path d="M3 2h16v5h-2l-1-2h-3v13h3v2H6v-2h3V5H6L5 7H3z" fill="#858587" stroke="none"/><path d="M15 17h9l-4.500 5z" fill="#858587" stroke="none"/>',
    dimstyle: '<path d="M1 8h22M5 4L1 8l4 4M19 4l4 4-4 4" stroke="#777"/><path d="M14 17h10l-5 5z" fill="#777" stroke="none"/>',
    leaderstyle: '<path d="M2 20L8 6l6 10M1 15l1 6 5-3" stroke="#888"/><path d="M14 1h10v10H14zM14 17h9l-4.500 5z" fill="#888" stroke="none"/><path d="M16 4h6M19 4v6" stroke="#222"/>',
    // third row
    twolines: '<path d="M5 7h14M5 16h14" stroke="#ddd"/><path d="M1 11h10" stroke="#ddd"/><path class="t" d="M11 11h12"/>',
    tealbeam: '<path class="t" d="M4 1h16v21H4zM4 3h16"/><path d="M7 7h10v3h-3v6h3v3H7v-3h3v-6H7z" fill="#888"/>',
    noteT: '<path class="t" d="M5 8V4h9"/><path d="M5 10v12" stroke-dasharray="3 2"/><path class="f" d="M3 9h4v4H3zM3 18h4v4H3zM14 0h9v9h-9z"/><path d="M16 2h5M18.500 2v6" stroke="#222"/>',
    hand: '<path d="M5 1h10v20H5z" fill="#1fb5a0" stroke="none"/><path class="f" d="M14 10l4 5 3 3v5h-6l-3-6 2-1z"/>',
    layersteal: '<path class="f" d="M8 2h15l-7 7H1z"/><path d="M1 13h15l7-7M1 17h15l7-7M1 21h15l7-7" stroke="#1fb5a0" stroke-width="3"/>',
    halfline: '<path d="M1 12h12" stroke="#ddd" stroke-width="2"/><path class="t" d="M13 12h10" stroke-width="2"/>',
    fourlines: '<path class="t" d="M1 7h22"/><path d="M1 11h22M1 15h22" stroke="#999" stroke-dasharray="4 1"/>',
    rotate: '<path class="t" d="M9 3C2 7 3 18 10 21M15 3c8 4 8 15 0 19M5 2l5 1-1 5"/><path d="M1 19h4v4H1z" fill="#1fb5a0" stroke="none"/>',
    scale: '<path d="M7 1h16v17H11" stroke="#888"/><path class="t" d="M12 12l7-8M14 4h5v5"/><path class="f" d="M6 12h5v5H6z"/><path d="M1 19h4v4H1z" fill="#1fb5a0" stroke="none"/>',
    spacing: '<path class="t" d="M1 7h22M5 3L1 7l4 4M19 3l4 4-4 4M2 1v3M22 1v3"/><path d="M1 16h22M6 13v7M9 12v9M13 12v9M17 13v7"/>',
    diagdims: '<path class="t" d="M2 17L16 3M11 2h6v6M1 12v6h6"/><path d="M6 21l15-13M9 17l5 5M12 14l5 5M16 11l5 5" stroke-width="2"/><path d="M1 20h4v4H1z" fill="#1fb5a0" stroke="none"/>',
    // quick access
    new: '<path class="f" d="M2 3h12l5 5v13H2z"/>',
    open: '<path class="f" d="M2 3h8l2 3h10v15H2z"/>',
    save: '<path d="M2 10v11h20V10M12 2v12M7 10l5 5 5-5" stroke-width="3"/>',
    saveas: '<path d="M2 10v11h20V10M6 4h10v9M11 10l5 5 5-5" stroke-width="3"/>',
    print: '<path d="M5 2h14v6H5zM2 10h20v7H2zM5 17h14v6H5z" stroke="#777" fill="#555"/>',
    export: '<path class="f" d="M6 2h12l5 5v14H14v-9H6z"/><path d="M1 12h11v11H1zM4 15l5 5M9 15l-5 5"/>',
    back: '<path class="f" d="M1 12l9-8v5h13v6H10v5z"/>',
    forward: '<path class="f" d="M23 12l-9-8v5H1v6h13v5z"/>'
};

document.querySelectorAll('[data-icons]').forEach(run => {
    run.innerHTML = run.dataset.icons.split(' ').map(name => {
        const body = name.split('+').map(p => parts[p]).join('');
        return `<button aria-label="${name}"><svg viewBox="0 0 24 24" fill="none" stroke="#bdbdbd" stroke-width="1.500">${body}</svg></button>`;
    }).join('');
    run.querySelectorAll('.f').forEach(el => {
        el.setAttribute('fill', '#cfcfcf');
        el.setAttribute('stroke', 'none');
    });
    run.querySelectorAll('.t').forEach(el => el.setAttribute('stroke', '#1fb5a0'));
});
document.querySelector('.quick-access').insertAdjacentHTML('beforeend', '<span class="qa-more"></span>');

// Background grid: a major line every 5 steps
const step = 10.908;
let minor = '', major = '';
for (let n = -1; n < 120; n++) {
    const x = Math.round(316 + n * step) + 0.5;
    if (n % 5 === 0) major += `M${x} 187V987`; else minor += `M${x} 187V987`;
}
for (let n = -2; n < 73; n++) {
    const y = Math.round(207 + n * step) + 0.5;
    if (n % 5 === 0) major += `M305 ${y}H1615`; else minor += `M305 ${y}H1615`;
}
document.getElementById('grid').innerHTML = `<path class="minor" d="${minor}"/><path class="major" d="${major}"/>`;
```
